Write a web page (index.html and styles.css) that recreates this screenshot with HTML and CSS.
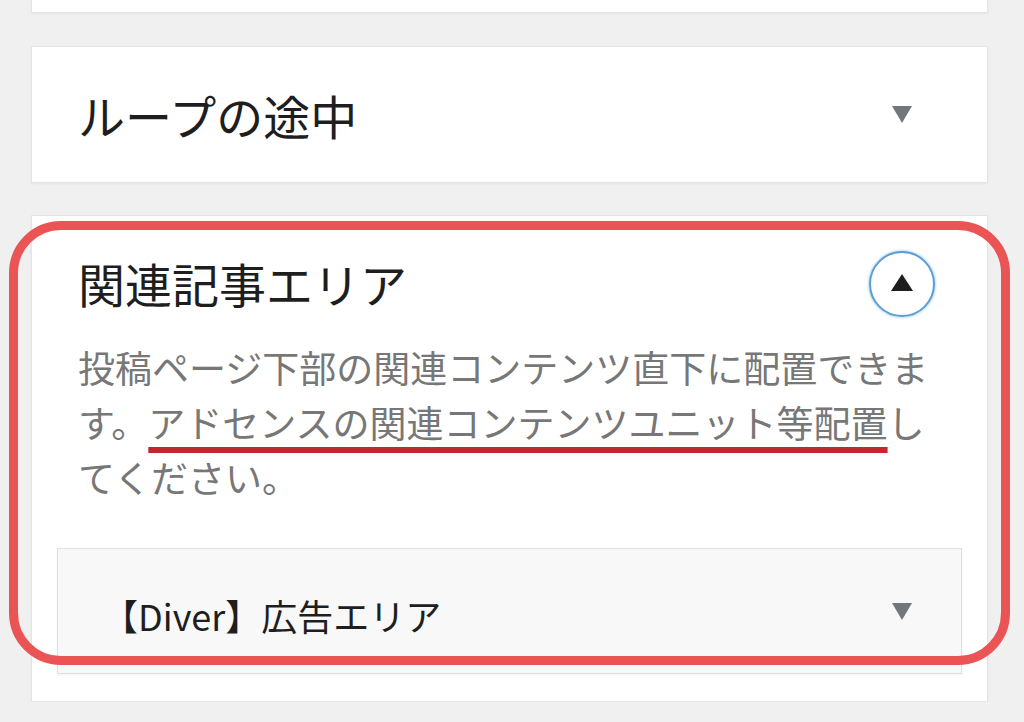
FILE: index.html
```html
<!DOCTYPE html>
<html lang="ja">
<head>
    <meta charset="utf-8">
    <link rel="stylesheet" href="styles.css">
</head>
<body>
    <div class="panel">
        <div class="widget widget-cut"></div>

        <div class="widget widget-closed">
            <div class="widget-head">
                <h3 class="widget-title">ループの途中</h3>
                <span class="toggle"><span class="arrow-down"></span></span>
            </div>
        </div>

        <div class="widget widget-open">
            <div class="widget-head">
                <h3 class="widget-title">関連記事エリア</h3>
                <span class="toggle toggle-focus"><span class="arrow-up"></span></span>
            </div>
            <p class="widget-desc">投稿ページ下部の関連コンテンツ直下に配置できます。<span class="mark">アドセンスの関連コンテンツユニット等配置</span>してください。</p>
            <div class="inner-widget">
                <span class="inner-title">【Diver】広告エリア</span>
                <span class="toggle"><span class="arrow-down"></span></span>
            </div>
            <div class="highlight"></div>
        </div>
    </div>
</body>
</html>
```

FILE: styles.css
```css
body {
    margin: 0;
    background-color: #f0f0f0;
    font-family: "Noto Sans CJK JP", "Noto Sans", sans-serif;
    color: #1e1e1e;
}

.panel {
    display: flex;
    flex-direction: column;
    padding: 0 36px 0 31px;
}

.widget {
    position: relative;
    background-color: #fff;
    border: 1px solid #e4e4e4;
    box-shadow: 0 1px 2px rgba(0,0,0,0.05);
}

.widget-cut {
    height: 12px;
    border-top: none;
}

.widget-closed {
    margin-top: 33px;
}

.widget-open {
    margin-top: 32px;
}

.widget-head {
    display: flex;
    align-items: center;
    justify-content: space-between;
    height: 135px;
    padding: 0 52px 0 46px;
}

.widget-title {
    margin: 0;
    font-size: 47px;
    font-weight: 400;
    line-height: 1;
}

.toggle {
    display: flex;
    align-items: center;
    justify-content: center;
    width: 66px;
    height: 66px;
    border-radius: 50%;
    box-sizing: border-box;
}

.toggle-focus {
    margin-top: -8px;
    border: 2px solid #5b9dd9;
    box-shadow: 0 0 3px rgba(30,140,190,0.6);
}

.arrow-down {
    width: 0;
    height: 0;
    border-left: 10px solid transparent;
    border-right: 10px solid transparent;
    border-top: 17px solid #72777c;
}

.arrow-up {
    width: 0;
    height: 0;
    margin-top: -4px;
    border-left: 11px solid transparent;
    border-right: 11px solid transparent;
    border-bottom: 17px solid #1e1e1e;
}

.widget-open .widget-head {
    height: 142px;
    align-items: flex-start;
    padding-top: 43px;
    box-sizing: border-box;
}

.widget-desc {
    margin: -18px 40px 0 46px;
    font-size: 37px;
    line-height: 55px;
    color: #777;
}

.mark {
    text-decoration: underline;
    text-decoration-color: #c1272d;
    text-decoration-thickness: 6px;
    text-underline-offset: 9px;
}

.inner-widget {
    display: flex;
    align-items: center;
    justify-content: space-between;
    height: 124px;
    margin: 43px 25px 27px;
    padding: 0 26px 0 44px;
    background-color: #f8f8f8;
    border: 1px solid #e0e0e0;
    box-shadow: 0 1px 2px rgba(0,0,0,0.05);
}

.inner-title {
    font-size: 36px;
    padding-top: 8px;
}

.highlight {
    position: absolute;
    left: -23px;
    right: -23px;
    top: 5px;
    bottom: 36px;
    border: 9px solid #ea5455;
    border-radius: 52px;
    pointer-events: none;
}
```
